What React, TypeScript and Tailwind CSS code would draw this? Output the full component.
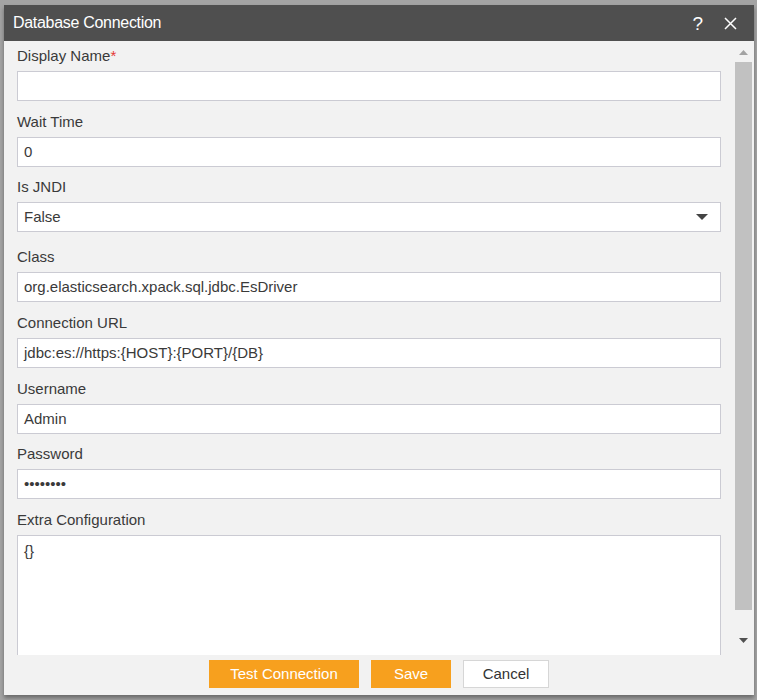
const font = { fontFamily: '"Liberation Sans", Arial, sans-serif' };

function Field({
  label,
  required,
  value,
  gap = "mb-[11px]",
}: {
  label: string;
  required?: boolean;
  value?: string;
  gap?: string;
}) {
  return (
    <div className={gap}>
      <div className="h-5 leading-5 text-[15px] text-[#3a3a3a] mb-[5px]">
        {label}
        {required && <span className="text-[#e53935]">*</span>}
      </div>
      <div className="h-[30px] bg-white border border-[#cbcbd3] px-[6px] flex items-center text-[15px] text-[#3a3a3a]">
        {value}
      </div>
    </div>
  );
}

export default function App() {
  return (
    <div className="w-[757px] h-[700px] bg-[#a4a4a4] pt-[5px] pl-[4px]" style={font}>
      <div className="w-[750px] h-[690px] flex flex-col bg-[#f2f2f2] shadow-[0_3px_4px_rgba(0,0,0,0.35)]">
        {/* title bar */}
        <div className="h-9 shrink-0 bg-[#4f4f4f] flex items-center pl-[9px] pr-[17px]">
          <span className="text-white text-[16px] tracking-[-0.3px] flex-1">Database Connection</span>
          <span className="text-white text-[19px] font-light mr-[21px] leading-none">?</span>
          <svg width="13" height="13" viewBox="0 0 13 13" className="mt-[1px]">
            <path d="M1 1 L12 12 M12 1 L1 12" stroke="#fff" strokeWidth="1.5" />
          </svg>
        </div>

        {/* scroll body */}
        <div className="h-[614px] shrink-0 flex overflow-hidden">
          <div className="flex-1 pl-[13px] pr-[14px] pt-[5px] overflow-hidden">
            <Field label="Display Name" required />
            <Field label="Wait Time" value="0" gap="mb-[10px]" />
            <div className="mb-[15px]">
              <div className="h-5 leading-5 text-[15px] text-[#3a3a3a] mb-[5px]">Is JNDI</div>
              <div className="h-[30px] bg-white border border-[#cbcbd3] pl-[6px] pr-[12px] flex items-center text-[15px] text-[#3a3a3a]">
                <span className="flex-1">False</span>
                <svg width="12" height="6" viewBox="0 0 12 6">
                  <path d="M0 0 L12 0 L6 6 Z" fill="#444" />
                </svg>
              </div>
            </div>
            <Field label="Class" value="org.elasticsearch.xpack.sql.jdbc.EsDriver" />
            <Field label="Connection URL" value="jdbc:es://https:{HOST}:{PORT}/{DB}" />
            <Field label="Username" value="Admin" gap="mb-[10px]" />
            <Field label="Password" value="••••••••" />
            <div>
              <div className="h-5 leading-5 text-[15px] text-[#3a3a3a] mb-[5px]">Extra Configuration</div>
              <div className="h-[160px] bg-white border border-[#cbcbd3] px-[6px] pt-[4px] text-[15px] text-[#3a3a3a]">
                {"{}"}
              </div>
            </div>
          </div>

          {/* scrollbar */}
          <div className="w-[17px] mr-[2px] flex flex-col items-center">
            <svg width="9" height="5" viewBox="0 0 9 5" className="mt-[9px]">
              <path d="M0 5 L9 5 L4.5 0 Z" fill="#a3a3a3" />
            </svg>
            <div className="w-full h-[548px] mt-[7px] bg-[#c1c1c1]" />
            <svg width="9" height="5" viewBox="0 0 9 5" className="mt-[28px]">
              <path d="M0 0 L9 0 L4.5 5 Z" fill="#505050" />
            </svg>
          </div>
        </div>

        {/* footer */}
        <div className="flex-1 flex justify-center items-start pt-[5px] gap-[13px]">
          <button className="h-7 w-[150px] bg-[#f7a01e] text-white text-[15px]">Test Connection</button>
          <button className="h-7 w-[80px] bg-[#f7a01e] text-white text-[15px] -ml-[1px]">Save</button>
          <button className="h-7 w-[86px] bg-white border border-[#d6d6d6] text-[#333] text-[15px] -ml-[1px]">
            Cancel
          </button>
        </div>
      </div>
    </div>
  );
}
